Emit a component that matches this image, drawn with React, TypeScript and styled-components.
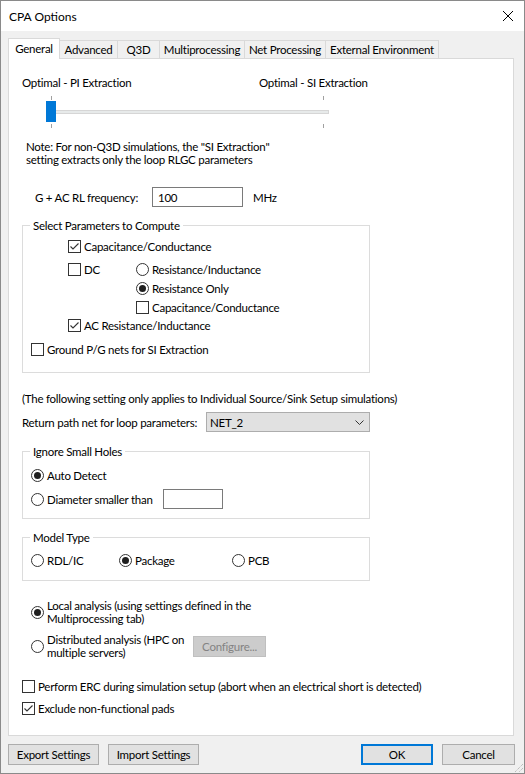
import React from 'react';
import styled, { createGlobalStyle } from 'styled-components';

const FONT = `Lato, "Liberation Sans", Arial, sans-serif`;

const GlobalStyle = createGlobalStyle`
  html, body { margin: 0; padding: 0; background: #ffffff; }
  body {
    font-family: ${FONT};
    font-size: 11.5px;
    letter-spacing: -0.25px;
    line-height: 13px;
    color: #000;
  }
  *, *::before, *::after { box-sizing: border-box; }
`;

// рамка окна
const Window = styled.div`
  position: relative;
  width: 525px;
  height: 774px;
  border: 1px solid #8a8a8a;
  background: #f0f0f0;
  overflow: hidden;
`;

const TitleBar = styled.div`
  height: 30px;
  background: #ffffff;
  display: flex;
  align-items: center;
  justify-content: space-between;
  padding: 0 11px 0 8px;
`;

const Title = styled.span`
  font-size: 12px;
  letter-spacing: 0;
`;

const Body = styled.div`
  padding: 7px 9px 0 7px;
`;

// вкладки
const TabStrip = styled.div`
  display: flex;
  align-items: flex-end;
  height: 20px;
`;

const Tab = styled.div<{ $w: number; $active?: boolean }>`
  position: relative;
  z-index: ${p => (p.$active ? 2 : 1)};
  width: ${p => p.$w}px;
  height: ${p => (p.$active ? 21 : 18)}px;
  margin-right: -1px;
  margin-bottom: ${p => (p.$active ? -1 : 0)}px;
  padding-bottom: ${p => (p.$active ? 2 : 0)}px;
  display: flex;
  align-items: center;
  justify-content: center;
  border: 1px solid #d9d9d9;
  border-bottom: none;
  background: ${p => (p.$active ? '#ffffff' : '#f0f0f0')};
  white-space: nowrap;
`;

const Panel = styled.div`
  position: relative;
  width: 506px;
  height: 678px;
  border: 1px solid #d9d9d9;
  background: #ffffff;
  padding: 0 0 0 13px;
`;

// ползунок
const SliderLabels = styled.div`
  margin-top: 17px;
  display: grid;
  grid-template-columns: 237px auto;
`;

const Slider = styled.div`
  position: relative;
  margin: 7px 0 0 24px;
  width: 283px;
  height: 32px;
`;

const Track = styled.div`
  position: absolute;
  left: 5px;
  right: 0;
  top: 14px;
  height: 4px;
  background: #e7eaea;
  border: 1px solid #d6d6d6;
`;

const Tick = styled.div<{ $x: number; $y: number }>`
  position: absolute;
  left: ${p => p.$x}px;
  top: ${p => p.$y}px;
  width: 1px;
  height: 4px;
  background: #a0a0a0;
`;

const Thumb = styled.div`
  position: absolute;
  left: 0;
  top: 5px;
  width: 10px;
  height: 21px;
  background: #0078d7;
`;

const Text = styled.div<{ $top: number; $indent?: number }>`
  margin: ${p => p.$top}px 0 0 ${p => p.$indent ?? 0}px;
  white-space: nowrap;
`;

// поля ввода
const FieldRow = styled.div<{ $top: number; $indent?: number }>`
  display: flex;
  align-items: center;
  height: 20px;
  margin: ${p => p.$top}px 0 0 ${p => p.$indent ?? 0}px;
`;

const FieldLabel = styled.span<{ $w: number }>`
  flex: none;
  width: ${p => p.$w}px;
  white-space: nowrap;
`;

const TextBox = styled.div<{ $w: number }>`
  flex: none;
  width: ${p => p.$w}px;
  height: 20px;
  display: flex;
  align-items: center;
  padding-left: 5px;
  border: 1px solid #7a7a7a;
  background: #ffffff;
`;

const Unit = styled.span`
  margin-left: 10px;
`;

const Combo = styled.div<{ $w: number }>`
  flex: none;
  width: ${p => p.$w}px;
  height: 20px;
  display: flex;
  align-items: center;
  justify-content: space-between;
  padding: 0 5px 0 3px;
  border: 1px solid #adadad;
  background: #e1e1e1;
`;

// группы
const Group = styled.fieldset<{ $top: number; $pad: number }>`
  margin: ${p => p.$top}px 0 0 0;
  padding: 0 0 ${p => p.$pad}px 8px;
  width: 348px;
  min-width: 0;
  border: 1px solid #dcdcdc;
`;

const Legend = styled.legend`
  margin-left: -1px;
  padding: 0 3px;
  line-height: 13px;
`;

const Option = styled.div<{ $top?: number; $indent?: number }>`
  display: flex;
  align-items: center;
  gap: 3px;
  min-height: 17px;
  margin: ${p => p.$top ?? 0}px 0 0 ${p => p.$indent ?? 0}px;
  white-space: nowrap;
`;

const OptionText = styled.span<{ $w?: number }>`
  width: ${p => (p.$w ? `${p.$w}px` : 'auto')};
  flex: none;
`;

const SubRow = styled.div`
  display: flex;
  margin: 6px 0 0 37px;
`;

const DcCell = styled.div`
  width: 68px;
`;

const SubColumn = styled.div`
  display: flex;
  flex-direction: column;
  gap: 2px;
`;

const ChoiceRow = styled.div`
  display: grid;
  grid-template-columns: 88px 113px auto;
  margin-top: 8px;
`;

const BoxMark = styled.span`
  flex: none;
  width: 13px;
  height: 13px;
  display: flex;
  align-items: center;
  justify-content: center;
  border: 1px solid #333333;
  background: #ffffff;
`;

const RadioMark = styled.span<{ $on?: boolean }>`
  flex: none;
  width: 13px;
  height: 13px;
  display: flex;
  align-items: center;
  justify-content: center;
  border: 1px solid #333333;
  border-radius: 50%;
  background: #ffffff;

  &::after {
    content: '';
    display: ${p => (p.$on ? 'block' : 'none')};
    width: 7px;
    height: 7px;
    border-radius: 50%;
    background: #1f1f1f;
  }
`;

// кнопки
const ButtonBar = styled.div`
  display: flex;
  gap: 9px;
  margin-top: 8px;
`;

const Button = styled.div<{ $w: number; $primary?: boolean; $disabled?: boolean; $push?: boolean }>`
  flex: none;
  width: ${p => p.$w}px;
  height: 21px;
  margin-left: ${p => (p.$push ? 'auto' : '0')};
  display: flex;
  align-items: center;
  justify-content: center;
  border: ${p => (p.$primary ? '2px solid #0078d7' : p.$disabled ? '1px solid #bfbfbf' : '1px solid #adadad')};
  background: ${p => (p.$disabled ? '#cccccc' : '#e1e1e1')};
  color: ${p => (p.$disabled ? '#838383' : '#000000')};
  white-space: nowrap;
`;

const Grip = styled.svg`
  position: absolute;
  right: 0;
  bottom: 0;
`;

const Check: React.FC<{ checked?: boolean }> = ({ checked }) => (
  <BoxMark>
    {checked && (
      <svg width="11" height="11" viewBox="0 0 11 11">
        <path d="M1.5 5.5 L4 8 L9.5 2.5" fill="none" stroke="#333333" strokeWidth="1.1" />
      </svg>
    )}
  </BoxMark>
);

const tabs = [
  { label: 'General', w: 52 },
  { label: 'Advanced', w: 59 },
  { label: 'Q3D', w: 43 },
  { label: 'Multiprocessing', w: 86 },
  { label: 'Net Processing', w: 82 },
  { label: 'External Environment', w: 114 },
];

const App: React.FC = () => (
  <>
    <GlobalStyle />
    <Window>
      <TitleBar>
        <Title>CPA Options</Title>
        <svg width="10" height="10" viewBox="0 0 10 10">
          <path d="M0 0 L10 10 M10 0 L0 10" stroke="#000000" strokeWidth="1" />
        </svg>
      </TitleBar>

      <Body>
        <TabStrip>
          {tabs.map((t, i) => (
            <Tab key={t.label} $w={t.w} $active={i === 0}>
              {t.label}
            </Tab>
          ))}
        </TabStrip>

        <Panel>
          <SliderLabels>
            <span>Optimal - PI Extraction</span>
            <span>Optimal - SI Extraction</span>
          </SliderLabels>
          <Slider>
            <Tick $x={5} $y={0} />
            <Tick $x={277} $y={0} />
            <Track />
            <Thumb />
            <Tick $x={5} $y={28} />
            <Tick $x={277} $y={28} />
          </Slider>

          <Text $top={12} $indent={4}>
            Note: For non-Q3D simulations, the "SI Extraction"
            <br />
            setting extracts only the loop RLGC parameters
          </Text>

          <FieldRow $top={21} $indent={13}>
            <FieldLabel $w={117}>G + AC RL frequency:</FieldLabel>
            <TextBox $w={91}>100</TextBox>
            <Unit>MHz</Unit>
          </FieldRow>

          <Group $top={12} $pad={14}>
            <Legend>Select Parameters to Compute</Legend>
            <Option $top={6} $indent={37}>
              <Check checked />
              <span>Capacitance/Conductance</span>
            </Option>
            <SubRow>
              <DcCell>
                <Option>
                  <Check />
                  <span>DC</span>
                </Option>
              </DcCell>
              <SubColumn>
                <Option>
                  <RadioMark />
                  <span>Resistance/Inductance</span>
                </Option>
                <Option>
                  <RadioMark $on />
                  <span>Resistance Only</span>
                </Option>
                <Option>
                  <Check />
                  <span>Capacitance/Conductance</span>
                </Option>
              </SubColumn>
            </SubRow>
            <Option $top={1} $indent={37}>
              <Check checked />
              <span>AC Resistance/Inductance</span>
            </Option>
            <Option $top={7}>
              <Check />
              <span>Ground P/G nets for SI Extraction</span>
            </Option>
          </Group>

          <Text $top={19}>(The following setting only applies to Individual Source/Sink Setup simulations)</Text>

          <FieldRow $top={7}>
            <FieldLabel $w={184}>Return path net for loop parameters:</FieldLabel>
            <Combo $w={164}>
              <span>NET_2</span>
              <svg width="9" height="5" viewBox="0 0 9 5">
                <path d="M0.5 0.5 L4.5 4.5 L8.5 0.5" fill="none" stroke="#333333" strokeWidth="1" />
              </svg>
            </Combo>
          </FieldRow>

          <Group $top={13} $pad={9}>
            <Legend>Ignore Small Holes</Legend>
            <Option $top={9}>
              <RadioMark $on />
              <span>Auto Detect</span>
            </Option>
            <FieldRow $top={5}>
              <Option>
                <RadioMark />
                <OptionText $w={116}>Diameter smaller than</OptionText>
              </Option>
              <TextBox $w={60} />
            </FieldRow>
          </Group>

          <Group $top={12} $pad={11}>
            <Legend>Model Type</Legend>
            <ChoiceRow>
              <Option>
                <RadioMark />
                <span>RDL/IC</span>
              </Option>
              <Option>
                <RadioMark $on />
                <span>Package</span>
              </Option>
              <Option>
                <RadioMark />
                <span>PCB</span>
              </Option>
            </ChoiceRow>
          </Group>

          <Option $top={18} $indent={9}>
            <RadioMark $on />
            <OptionText>
              Local analysis (using settings defined in the
              <br />
              Multiprocessing tab)
            </OptionText>
          </Option>
          <Option $top={8} $indent={9}>
            <RadioMark />
            <OptionText $w={143}>
              Distributed analysis (HPC on
              <br />
              multiple servers)
            </OptionText>
            <Button $w={73} $disabled>
              Configure...
            </Button>
          </Option>

          <Option $top={19}>
            <Check />
            <span>Perform ERC during simulation setup (abort when an electrical short is detected)</span>
          </Option>
          <Option $top={5}>
            <Check checked />
            <span>Exclude non-functional pads</span>
          </Option>
        </Panel>

        <ButtonBar>
          <Button $w={91}>Export Settings</Button>
          <Button $w={91}>Import Settings</Button>
          <Button $w={72} $primary $push>
            OK
          </Button>
          <Button $w={73}>Cancel</Button>
        </ButtonBar>
      </Body>

      <Grip width="10" height="10" viewBox="0 0 10 10">
        <path d="M9 1 L1 9 M9 5 L5 9" stroke="#a8a8a8" strokeWidth="1" strokeDasharray="1 1" />
      </Grip>
    </Window>
  </>
);

export default App;
